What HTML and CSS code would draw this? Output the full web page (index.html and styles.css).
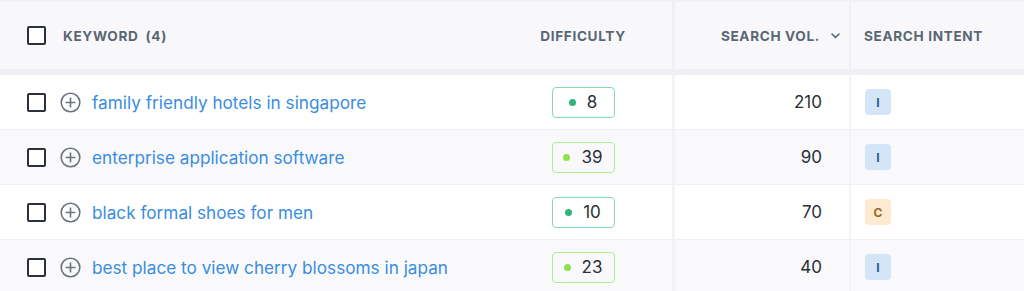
FILE: index.html
```html
<!DOCTYPE html>
<html>
<head>
<meta charset="utf-8">
<link rel="stylesheet" href="styles.css">
</head>
<body>
<div class="table">
  <div class="row head">
    <div class="cell kw">
      <span class="cb"></span>
      <span class="htext hkw">Keyword</span>
      <span class="htext hcount">(4)</span>
    </div>
    <div class="cell diff"><span class="htext">Difficulty</span></div>
    <div class="cell vol">
      <span class="htext">Search Vol.</span>
      <svg class="chev" width="9" height="6" viewBox="0 0 9 6"><path d="M1 1l3.5 3.5L8 1" fill="none" stroke="#5b6673" stroke-width="1.6" stroke-linecap="round" stroke-linejoin="round"/></svg>
    </div>
    <div class="cell intent"><span class="htext">Search Intent</span></div>
  </div>

  <div class="row">
    <div class="cell kw">
      <span class="cb"></span>
      <svg class="plus" width="21" height="21" viewBox="0 0 21 21"><circle cx="10.5" cy="10.5" r="9.3" fill="none" stroke="#6b737c" stroke-width="1.6"/><path d="M10.5 5.6v9.8M5.6 10.5h9.8" stroke="#6b737c" stroke-width="1.6"/></svg>
      <a class="link">family friendly hotels in singapore</a>
    </div>
    <div class="cell diff"><span class="kd dark"><i></i><b>8</b></span></div>
    <div class="cell vol"><span class="num">210</span></div>
    <div class="cell intent"><span class="tag i">I</span></div>
  </div>

  <div class="row alt">
    <div class="cell kw">
      <span class="cb"></span>
      <svg class="plus" width="21" height="21" viewBox="0 0 21 21"><circle cx="10.5" cy="10.5" r="9.3" fill="none" stroke="#6b737c" stroke-width="1.6"/><path d="M10.5 5.6v9.8M5.6 10.5h9.8" stroke="#6b737c" stroke-width="1.6"/></svg>
      <a class="link">enterprise application software</a>
    </div>
    <div class="cell diff"><span class="kd light"><i></i><b>39</b></span></div>
    <div class="cell vol"><span class="num">90</span></div>
    <div class="cell intent"><span class="tag i">I</span></div>
  </div>

  <div class="row">
    <div class="cell kw">
      <span class="cb"></span>
      <svg class="plus" width="21" height="21" viewBox="0 0 21 21"><circle cx="10.5" cy="10.5" r="9.3" fill="none" stroke="#6b737c" stroke-width="1.6"/><path d="M10.5 5.6v9.8M5.6 10.5h9.8" stroke="#6b737c" stroke-width="1.6"/></svg>
      <a class="link">black formal shoes for men</a>
    </div>
    <div class="cell diff"><span class="kd dark"><i></i><b>10</b></span></div>
    <div class="cell vol"><span class="num">70</span></div>
    <div class="cell intent"><span class="tag c">C</span></div>
  </div>

  <div class="row alt">
    <div class="cell kw">
      <span class="cb"></span>
      <svg class="plus" width="21" height="21" viewBox="0 0 21 21"><circle cx="10.5" cy="10.5" r="9.3" fill="none" stroke="#6b737c" stroke-width="1.6"/><path d="M10.5 5.6v9.8M5.6 10.5h9.8" stroke="#6b737c" stroke-width="1.6"/></svg>
      <a class="link">best place to view cherry blossoms in japan</a>
    </div>
    <div class="cell diff"><span class="kd light"><i></i><b>23</b></span></div>
    <div class="cell vol"><span class="num">40</span></div>
    <div class="cell intent"><span class="tag i">I</span></div>
  </div>
</div>
</body>
</html>
```

FILE: styles.css
```css
html, body {
  margin: 0;
  padding: 0;
  background: #ffffff;
}
body {
  font-family: "Inter", "Noto Sans", sans-serif;
  color: #2b2f36;
  width: 1024px;
  height: 291px;
  overflow: hidden;
}
.table {
  display: flex;
  flex-direction: column;
  background: #f0f1f5;
}
.row {
  display: grid;
  grid-template-columns: 494px 178px 177px 175px;
  height: 54px;
  background: #ffffff;
  border-bottom: 1px solid #eff0f4;
}
.row.alt {
  background: #f9f9fb;
}
.row.head {
  height: 67px;
  margin-top: 2px;
  border-bottom: 6px solid #eff0f4;
  background: #f8f8fb;
}
.cell {
  display: flex;
  align-items: center;
  min-width: 0;
}
.cell.vol {
  border-left: 3px solid #f2f3f6;
  justify-content: flex-end;
  padding-right: 27px;
}
.cell.intent {
  border-left: 2px solid #f2f3f6;
  padding-left: 14px;
}
.head .cell.vol {
  border-left-color: #eff0f4;
  padding-right: 9px;
}
.head .cell.intent {
  border-left-color: #eff0f4;
  padding-left: 13px;
}
.cell.kw {
  padding-left: 27px;
}
.cell.diff {
  justify-content: center;
}
.cb {
  box-sizing: border-box;
  width: 19px;
  height: 19px;
  border: 2px solid #2b303a;
  border-radius: 2px;
  background: #fff;
  flex: none;
}
.htext {
  font-size: 13.6px;
  font-weight: 700;
  text-transform: uppercase;
  letter-spacing: 0.65px;
  color: #5b6673;
  white-space: nowrap;
}
.hkw {
  margin-left: 17px;
}
.hcount {
  margin-left: 7px;
}
.chev {
  margin-left: 11px;
}
.plus {
  flex: none;
  margin-left: 14px;
}
.link {
  margin-left: 11px;
  font-size: 17.2px;
  color: #3a8de0;
  white-space: nowrap;
}
.kd {
  box-sizing: border-box;
  width: 63px;
  height: 31px;
  border: 1px solid;
  border-radius: 4px;
  display: flex;
  align-items: center;
  justify-content: center;
  gap: 11px;
  font-size: 17px;
  color: #2b2f36;
}
.kd b {
  font-weight: 400;
}
.kd i {
  width: 7px;
  height: 7px;
  border-radius: 50%;
  display: block;
}
.kd.dark { border-color: #86d9b3; }
.kd.dark i { background: #2db57a; }
.kd.light { border-color: #b3ea95; }
.kd.light i { background: #8fe24b; }
.num {
  font-size: 17px;
  color: #2b2f36;
}
.tag {
  width: 26px;
  height: 26px;
  border-radius: 4px;
  display: flex;
  align-items: center;
  justify-content: center;
  font-size: 12px;
  font-weight: 700;
}
.tag.i {
  background: #d3e5f7;
  color: #2c5d8f;
}
.tag.c {
  background: #fdead0;
  color: #9a661c;
}
```
